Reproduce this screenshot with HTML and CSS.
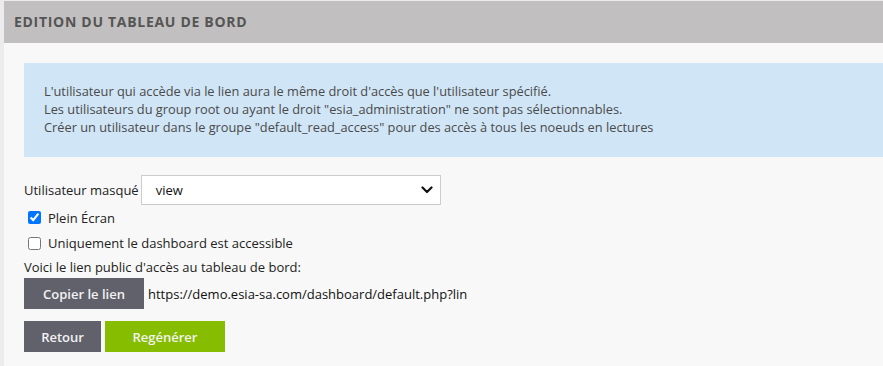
FILE: index.html
```html
<!DOCTYPE html>
<html lang="fr">
<head>
<meta charset="utf-8">
<title>Edition du tableau de bord</title>
<link rel="stylesheet" href="styles.css">
</head>
<body>
<div class="panel">
  <div class="panel-head">EDITION DU TABLEAU DE BORD</div>
  <div class="panel-body">
    <div class="info">
      L'utilisateur qui accède via le lien aura le même droit d'accès que l'utilisateur spécifié.<br>
      Les utilisateurs du group root ou ayant le droit "esia_administration" ne sont pas sélectionnables.<br>
      Créer un utilisateur dans le groupe "default_read_access" pour des accès à tous les noeuds en lectures
    </div>
    <div class="row-select">
      <span class="label">Utilisateur masqué</span>
      <div class="select">
        <span>view</span>
        <svg class="chev" width="12" height="8" viewBox="0 0 12 8"><path d="M1.5 1.5 L6 6 L10.5 1.5" fill="none" stroke="#111" stroke-width="2.2" stroke-linecap="round" stroke-linejoin="round"/></svg>
      </div>
    </div>
    <label class="cb cb1"><input type="checkbox" checked><span>Plein Écran</span></label>
    <label class="cb cb2"><input type="checkbox"><span>Uniquement le dashboard est accessible</span></label>
    <div class="link-label">Voici le lien public d'accès au tableau de bord:</div>
    <div class="link-row">
      <button class="btn btn-dark btn-copy">Copier le lien</button>
      <span class="url">https://demo.esia-sa.com/dashboard/default.php?lin</span>
    </div>
    <div class="actions">
      <button class="btn btn-dark btn-back">Retour</button>
      <button class="btn btn-green btn-regen">Regénérer</button>
    </div>
  </div>
</div>
</body>
</html>
```
FILE: styles.css
```css
html, body { margin: 0; padding: 0; }
body {
  background: #ececec;
  padding: 1px 0 0 4px;
  font-family: "Open Sans", "Liberation Sans", sans-serif;
  height: 365px;
  overflow: hidden;
}
.panel {
  background: #f8f8f8;
  height: 365px;
}
.panel-head {
  background: #c1bfbf;
  height: 42px;
  line-height: 42px;
  padding-left: 10px;
  font-size: 14px;
  font-weight: 700;
  color: #555;
  letter-spacing: 0.7px;
}
.panel-body {
  padding: 20px 0 0 20px;
}
.info {
  background: #d0e5f6;
  padding: 19px 20px 21px;
  font-size: 12.8px;
  line-height: 18px;
  color: #4a4a4a;
}
.row-select {
  display: flex;
  align-items: center;
  margin-top: 18px;
  height: 30px;
}
.label {
  font-size: 13px;
  color: #222;
  margin-right: 2px;
}
.select {
  height: 28px;
  border: 1px solid #cccccc;
  background: #fff;
  display: flex;
  align-items: center;
  justify-content: space-between;
  padding: 0 7px 0 14px;
  box-sizing: content-box;
  width: 277px;
  font-size: 13px;
  color: #111;
}
.cb {
  display: flex;
  align-items: center;
  font-size: 13px;
  color: #222;
}
.cb input {
  margin: 0 7px 0 4px;
  width: 13px;
  height: 13px;
}
.cb1 { height: 25px; }
.cb2 { height: 26px; }
.link-label {
  height: 22px;
  line-height: 22px;
  font-size: 13px;
  color: #222;
}
.link-row {
  display: flex;
  align-items: center;
  height: 31px;
}
.url {
  margin-left: 4px;
  font-size: 13px;
  color: #111;
}
.actions {
  display: flex;
  gap: 4px;
  margin-top: 12px;
}
.btn {
  border: 0;
  height: 31px;
  padding: 0;
  font-family: inherit;
  font-size: 13px;
  font-weight: 600;
  color: #f2f2f2;
  cursor: pointer;
}
.btn-dark { background: #61616b; }
.btn-green { background: #86bd00; }
.btn-copy { width: 120px; }
.btn-back { width: 77px; }
.btn-regen { width: 120px; }
```
